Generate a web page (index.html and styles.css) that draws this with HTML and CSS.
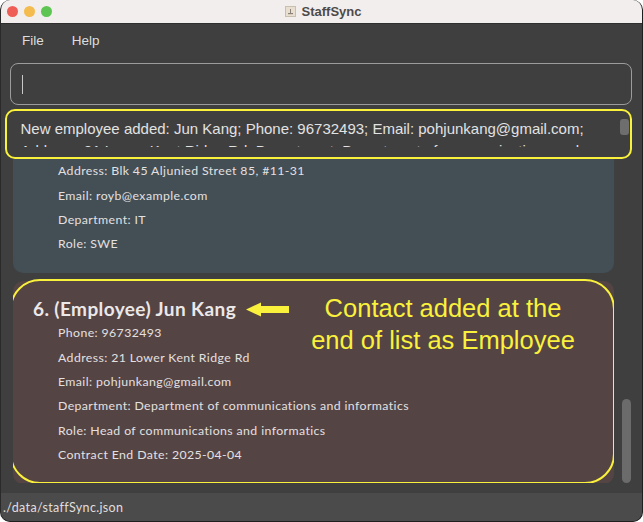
FILE: index.html
```html
<!DOCTYPE html>
<html>
<head>
<meta charset="utf-8">
<title>StaffSync</title>
<link rel="stylesheet" href="styles.css">
</head>
<body>
<div class="window">
  <header class="titlebar">
    <div class="lights">
      <span class="light red"></span>
      <span class="light yellow"></span>
      <span class="light green"></span>
    </div>
    <div class="title">
      <svg class="app-icon" width="11" height="11" viewBox="0 0 11 11">
        <rect x="0.5" y="0.5" width="10" height="10" fill="#e8dfd0" stroke="#c9bfae"/>
        <rect x="5" y="3" width="1" height="4" fill="#8a8276"/>
        <rect x="3" y="7" width="5" height="1.2" fill="#8a8276"/>
      </svg>
      <span>StaffSync</span>
    </div>
  </header>
  <nav class="menubar">
    <span class="menu-item">File</span>
    <span class="menu-item">Help</span>
  </nav>
  <div class="command"><span class="caret"></span></div>
  <div class="result">
    <div class="result-text">New employee added: Jun Kang; Phone: 96732493; Email: pohjunkang@gmail.com; Address: 21 Lower Kent Ridge Rd; Department: Department of communications and informatics; Role: Head of communications and informatics; Contract End Date: 2025-04-04</div>
    <span class="result-thumb"></span>
  </div>
  <main class="list-area">
    <div class="list-viewport">
      <div class="list-content">
        <section class="card card-blue">
          <h2 class="card-name">5. (Employee) Roy Balakrishnan</h2>
          <p class="field">Phone: 92624417</p>
          <p class="field">Address: Blk 45 Aljunied Street 85, #11-31</p>
          <p class="field">Email: royb@example.com</p>
          <p class="field">Department: IT</p>
          <p class="field">Role: SWE</p>
        </section>
        <section class="card card-brown">
          <h2 class="card-name">6. (Employee) Jun Kang
            <svg class="arrow" width="44" height="15" viewBox="0 0 44 15">
              <polygon points="0,7.5 15,0.5 15,4 43,4 43,11 15,11 15,14.5" fill="#f9f13c"/>
            </svg>
          </h2>
          <p class="field">Phone: 96732493</p>
          <p class="field">Address: 21 Lower Kent Ridge Rd</p>
          <p class="field">Email: pohjunkang@gmail.com</p>
          <p class="field">Department: Department of communications and informatics</p>
          <p class="field">Role: Head of communications and informatics</p>
          <p class="field">Contract End Date: 2025-04-04</p>
          <div class="highlight"></div>
          <div class="note">Contact added at the<br>end of list as Employee</div>
        </section>
      </div>
    </div>
    <div class="scrollbar"><span class="thumb"></span></div>
  </main>
  <footer class="status">./data/staffSync.json</footer>
</div>
</body>
</html>
```
FILE: styles.css
```css
* { box-sizing: border-box; }
html, body { margin: 0; padding: 0; background: #ffffff; }
body { width: 643px; height: 522px; overflow: hidden; }

.window {
  width: 643px;
  height: 522px;
  display: flex;
  flex-direction: column;
  background: #3f3f3f;
  border-radius: 10px;
  overflow: hidden;
  border-right: 1px solid #1f1f1f;
  border-bottom: 1px solid #1f1f1f;
  border-left: 1px solid #2a2a2a;
}

.titlebar {
  height: 24px;
  flex: none;
  background: #f2eeee;
  position: relative;
  display: flex;
  align-items: center;
  justify-content: center;
  border-bottom: 1px solid #2f2f2f;
}
.lights {
  position: absolute;
  left: 6px;
  top: 6px;
  display: flex;
  gap: 6px;
}
.light { width: 11px; height: 11px; border-radius: 50%; display: block; }
.red { background: #ee5e56; }
.yellow { background: #f4bc4e; }
.green { background: #5fc552; }
.title {
  display: flex;
  align-items: center;
  gap: 6px;
  font-family: "Liberation Sans", Arial, sans-serif;
  font-weight: bold;
  font-size: 13px;
  color: #4d4a4a;
  margin-left: 3px;
}
.app-icon { display: block; }

.menubar {
  height: 32px;
  flex: none;
  display: flex;
  align-items: center;
  gap: 28px;
  padding-left: 21px;
  font-family: "Liberation Sans", Arial, sans-serif;
  font-size: 13.5px;
  color: #dddddd;
}

.command {
  flex: none;
  height: 42px;
  margin: 7px 10px 0 9px;
  border: 1.5px solid #9c9c9c;
  border-radius: 8px;
  position: relative;
}
.caret {
  position: absolute;
  left: 11px;
  top: 11px;
  width: 1px;
  height: 19px;
  background: #c8c8c8;
}

.result {
  flex: none;
  height: 50px;
  margin: 4px 10px 0 4px;
  border: 2.5px solid #f9f13c;
  border-radius: 10px;
  padding: 7px 20px 0 13.5px;
  position: relative;
}
.result-text {
  height: 28.5px;
  overflow: hidden;
  font-family: "Liberation Sans", Arial, sans-serif;
  font-size: 15px;
  line-height: 22px;
  color: #e2e2e2;
}
.result-thumb {
  position: absolute;
  right: 1.5px;
  top: 7.5px;
  width: 9px;
  height: 16px;
  border-radius: 3px;
  background: #6e6e6e;
}

.list-area {
  flex: 1;
  min-height: 0;
  display: flex;
  gap: 8px;
  padding: 0 11px 10px 12px;
}
.list-viewport {
  width: 601px;
  overflow: hidden;
}
.list-content {
  margin-top: -64px;
  display: flex;
  flex-direction: column;
  gap: 8px;
}
.card {
  border-radius: 10px;
  padding: 16px 20px 16px 20px;
  position: relative;
  font-family: Lato, "Liberation Sans", sans-serif;
  color: #e4e0e0;
}
.card-blue { background: #434e55; padding-bottom: 17px; }
.card-brown { background: #554444; padding-bottom: 17px; }
.card-name {
  margin: 0;
  font-size: 19px;
  font-weight: bold;
  letter-spacing: 0.4px;
  line-height: 24px;
  display: flex;
  align-items: center;
  color: #ece8e8;
}
.arrow { margin-left: 10px; display: block; }
.field {
  margin: 0 0 0 25px;
  font-size: 12.3px;
  letter-spacing: 0.4px;
  line-height: 24.3px;
}

.highlight {
  position: absolute;
  left: -3px;
  top: -2px;
  right: -1px;
  bottom: 0;
  border: 2.5px solid #f9f13c;
  border-radius: 30px;
}
.note {
  position: absolute;
  left: 280px;
  width: 300px;
  top: 11px;
  text-align: center;
  font-family: "Liberation Sans", Arial, sans-serif;
  font-size: 25.5px;
  line-height: 32px;
  color: #f9f13c;
}

.scrollbar {
  width: 9px;
  display: flex;
  flex-direction: column;
  justify-content: flex-end;
}
.thumb {
  display: block;
  height: 84px;
  border-radius: 4.5px;
  background: #6b6b6b;
}

.status {
  flex: none;
  height: 28px;
  background: #4b4b4b;
  padding-left: 2px;
  display: flex;
  align-items: center;
  font-family: Lato, "Liberation Sans", sans-serif;
  font-size: 12.5px;
  letter-spacing: 0.35px;
  color: #e0dede;
}
```
